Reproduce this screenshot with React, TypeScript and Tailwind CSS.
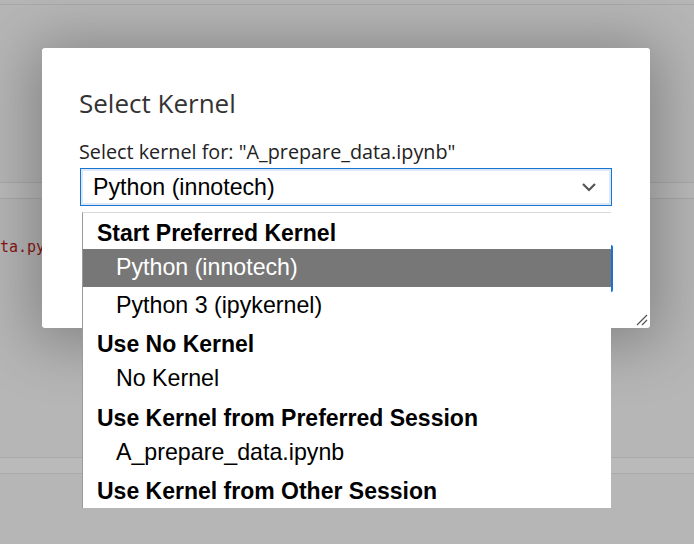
import React from "react";

const ui = { fontFamily: '"Open Sans", "Noto Sans", sans-serif' };
const arial = { fontFamily: '"Liberation Sans", Arial, sans-serif' };

function Header({ children }: { children: React.ReactNode }) {
  return (
    <div className="h-[36px] shrink-0 flex items-center pl-[14px] pt-[5px] text-[23px] font-bold text-black whitespace-nowrap">
      {children}
    </div>
  );
}

function Option({ children, active }: { children: React.ReactNode; active?: boolean }) {
  return (
    <div
      className={
        "h-[37.5px] shrink-0 flex items-center pl-[33px] text-[23.2px] whitespace-nowrap " +
        (active ? "bg-[#777777] text-white" : "text-black")
      }
    >
      {children}
    </div>
  );
}

export default function App() {
  return (
    <div className="relative w-[694px] h-[544px] overflow-hidden bg-[#b6b6b6]">
      {/* dimmed page behind the overlay */}
      <div className="flex flex-col">
        <div className="h-[5px] border-b border-[#a8a8a8]" />
        <div className="h-[177px]" />
        <div className="h-[17px] bg-[#bababa] border-t border-b border-[#a9a9a9]" />
        <div className="h-[258px] pt-[41px]">
          <div className="text-[15px] text-[#8a1414] leading-none" style={{ fontFamily: '"DejaVu Sans Mono", monospace' }}>
            ta.py
          </div>
        </div>
        <div className="h-[17px] bg-[#bababa] border-t border-b border-[#a9a9a9]" />
      </div>

      {/* dialog */}
      <div
        className="absolute left-[42px] top-[48px] w-[608px] h-[280px] bg-white rounded-[3px] shadow-[0_6px_60px_10px_rgba(0,0,0,0.28)] flex flex-col px-[38px] pt-[38px]"
        style={ui}
      >
        <div className="text-[26px] leading-[34px] text-[#333333] -ml-[1px]">Select Kernel</div>
        <div className="mt-[20px] text-[19.8px] leading-[24px] text-[#222222] -ml-[1px] whitespace-nowrap">
          Select kernel for: "A_prepare_data.ipynb"
        </div>
        <div className="relative mt-[4px]">
          <div
            className="h-[38px] border border-[#1a73d1] shadow-[inset_0_0_0_2px_#dce9f7] flex items-center pl-[12px] pr-[14px] text-[23.2px] text-black"
            style={arial}
          >
            <span className="flex-1">Python (innotech)</span>
            <svg width="16" height="10" viewBox="0 0 16 10">
              <polyline points="2,2 8,8 14,2" fill="none" stroke="#555" strokeWidth="2.2" />
            </svg>
          </div>
          {/* dialog footer button partly hidden behind list */}
          <div className="flex justify-end mt-[39px] -mr-[1px]">
            <div className="w-[110px] h-[47px] bg-[#1a73d1] rounded-[2px]" />
          </div>
          {/* dropdown list */}
          <div
            className="absolute left-[2px] right-[1px] top-[44px] h-[296px] overflow-hidden bg-white border-l border-[#9a9a9a] border-t border-t-[#d8d8d8] flex flex-col"
            style={arial}
          >
            <Header>Start Preferred Kernel</Header>
            <Option active>Python (innotech)</Option>
            <Option>Python 3 (ipykernel)</Option>
            <Header>Use No Kernel</Header>
            <Option>No Kernel</Option>
            <Header>Use Kernel from Preferred Session</Header>
            <Option>A_prepare_data.ipynb</Option>
            <Header>Use Kernel from Other Session</Header>
          </div>
        </div>
        {/* resize grip */}
        <svg className="absolute right-[2px] bottom-[2px]" width="12" height="12" viewBox="0 0 12 12">
          <line x1="1" y1="11" x2="11" y2="1" stroke="#555" strokeWidth="1.2" />
          <line x1="6" y1="11" x2="11" y2="6" stroke="#555" strokeWidth="1.2" />
        </svg>
      </div>
    </div>
  );
}
